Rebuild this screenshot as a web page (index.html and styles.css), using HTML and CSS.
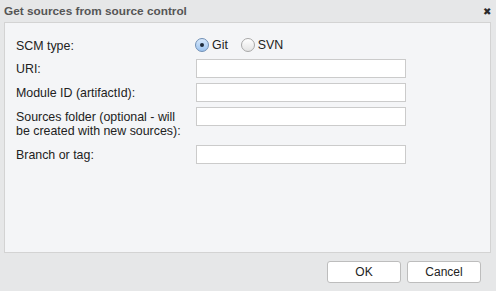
FILE: index.html
```html
<!DOCTYPE html>
<html lang="en">
<head>
	<meta charset="UTF-8">
	<title>Get sources from source control</title>
	<link rel="stylesheet" href="styles.css">
</head>
<body>
	<div class="dialog">
		<div class="titlebar">
			<span class="title">Get sources from source control</span>
			<span class="close">&#10006;</span>
		</div>
		<div class="panel">
			<div class="form">
				<label class="lbl">SCM type:</label>
				<div class="radios">
					<label class="radio"><input type="radio" name="scm" checked> Git</label>
					<label class="radio"><input type="radio" name="scm"> SVN</label>
				</div>
				<label class="lbl">URI:</label>
				<input type="text" class="field">
				<label class="lbl">Module ID (artifactId):</label>
				<input type="text" class="field">
				<label class="lbl tall">Sources folder (optional - will be created with new sources):</label>
				<input type="text" class="field">
				<label class="lbl">Branch or tag:</label>
				<input type="text" class="field">
			</div>
		</div>
		<div class="footer">
			<button class="btn">OK</button>
			<button class="btn">Cancel</button>
		</div>
	</div>
</body>
</html>
```
FILE: styles.css
```css
*{
	margin: 0;
	padding: 0;
	box-sizing: border-box;
}
body{
	background: #e6e7e8;
	font-family: "Liberation Sans", Arial, sans-serif;
	font-size: 12.4px;
	color: #222;
}
.dialog{
	width: 496px;
	height: 291px;
}
.titlebar{
	height: 22px;
	display: flex;
	align-items: center;
	justify-content: space-between;
	padding: 0 5px 0 4px;
}
.title{
	font-weight: bold;
	color: #555;
	font-size: 11.8px;
}
.close{
	font-size: 10px;
	color: #2a2a2a;
}
.panel{
	margin: 0 5px 0 4px;
	height: 231px;
	border: 1px solid #d3d3d3;
	background: #f4f5f7;
	padding: 13px 11px;
}
.form{
	display: grid;
	grid-template-columns: 180px 210px;
	row-gap: 5px;
	align-items: start;
}
.lbl{
	line-height: 14px;
	padding-top: 3px;
	width: 172px;
}
.lbl.tall{
	margin-bottom: 2px;
}
.radios{
	display: flex;
	gap: 13px;
	height: 17px;
	align-items: center;
	margin-left: -1px;
	margin-bottom: 1px;
}
.radio{
	display: flex;
	align-items: center;
	gap: 3px;
}
.radio input{
	appearance: none;
	width: 14px;
	height: 14px;
	border-radius: 50%;
	border: 1px solid #a8a8a8;
	background: linear-gradient(#ffffff, #e4e4e4);
	position: relative;
}
.radio input:checked{
	border-color: #6f8fb5;
	background: linear-gradient(#d7e8fb, #9cc3ef);
}
.radio input:checked::after{
	content: "";
	position: absolute;
	left: 4px;
	top: 4px;
	width: 4px;
	height: 4px;
	border-radius: 50%;
	background: #1d2a3a;
}
.field{
	width: 210px;
	height: 19px;
	border: 1px solid #cbcbcb;
	background: #fff;
}
.footer{
	display: flex;
	justify-content: flex-end;
	gap: 6px;
	padding: 8px 15px 0 0;
}
.btn{
	width: 74px;
	height: 22px;
	background: #fff;
	border: 1px solid #bdbdbd;
	border-radius: 3px;
	font-family: "Liberation Sans", Arial, sans-serif;
	font-size: 12px;
	color: #222;
}
```
